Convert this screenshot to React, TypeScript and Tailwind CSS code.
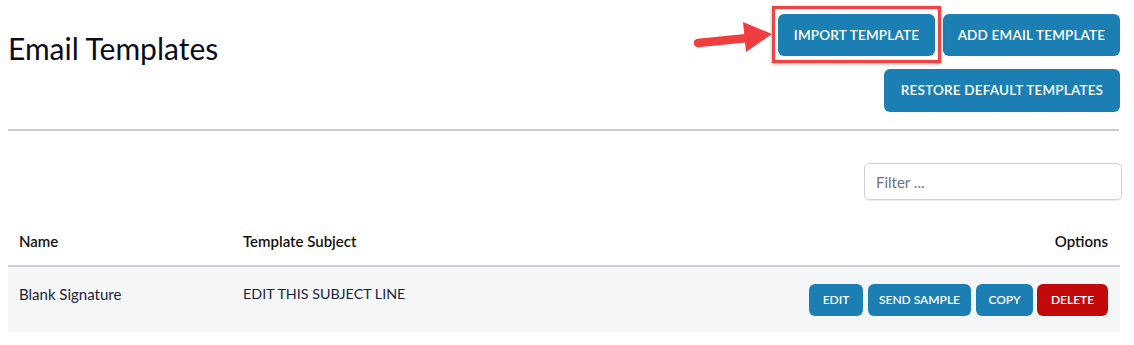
import React from "react";

const font = { fontFamily: '"Source Sans Pro", Lato, "Noto Sans", sans-serif' };

function Btn({ children, className = "" }: { children: React.ReactNode; className?: string }) {
  return (
    <button
      className={`bg-[#1b7fb4] text-white uppercase font-semibold rounded-[6px] ${className}`}
    >
      {children}
    </button>
  );
}

export default function App() {
  return (
    <div className="w-[1134px] h-[345px] bg-white text-[#111827] overflow-hidden" style={font}>
      <div className="ml-[8px] w-[1112px]">
        <div className="flex justify-between">
          <h1 className="pt-[30px] text-[30px] leading-[36px] text-[#0c0c1a]">Email Templates</h1>
          <div className="flex flex-col items-end pt-[14px] gap-[13px]">
            <div className="flex gap-[8px]">
              <div className="relative">
                <div className="absolute -left-[6px] -top-[8px] -right-[6px] -bottom-[7px] border-[3px] border-[#ef4444] shadow-[0_1px_3px_rgba(0,0,0,0.35),inset_0_0_2px_rgba(0,0,0,0.25)]" />
                <svg className="absolute left-[-86px] top-[6px]" width="82" height="34" viewBox="0 0 82 34">
                  <line x1="6" y1="23" x2="56" y2="18" stroke="#ef3e3e" strokeWidth="8.5" strokeLinecap="round" />
                  <polygon points="51,2 80,14 54,32" fill="#ef3e3e" />
                </svg>
                <Btn className="relative h-[42px] w-[157px] text-[13.5px] tracking-[0.2px]">Import Template</Btn>
              </div>
              <Btn className="h-[42px] w-[177px] text-[13.5px] tracking-[0.2px]">Add Email Template</Btn>
            </div>
            <Btn className="h-[43px] w-[236px] text-[13.5px] tracking-[0.2px]">Restore Default Templates</Btn>
          </div>
        </div>
        <div className="mt-[17px] h-[2px] w-[1111px] bg-[#c9ccd0]" />
        <div className="flex justify-end mt-[32px] -mr-[2px]">
          <input
            placeholder="Filter ..."
            className="w-[258px] h-[37px] border border-[#cfd2d6] rounded-[5px] px-[11px] text-[15px] text-[#333] placeholder:text-[#6b7280] shadow-[0_1px_1px_rgba(0,0,0,0.08)] outline-none"
            style={font}
          />
        </div>
        <div className="mt-[19px]">
          <div className="flex items-center h-[48px] pb-[2px] border-b-2 border-[#c9ccd0] text-[15px] font-semibold text-[#111]">
            <div className="pl-[11px] w-[235px]">Name</div>
            <div className="flex-1">Template Subject</div>
            <div className="pr-[12px]">Options</div>
          </div>
          <div className="flex items-start h-[65px] bg-[#f5f6f8] text-[15px] text-[#1a1f3a]">
            <div className="pl-[11px] w-[235px] pt-[15px] leading-[24px]">Blank Signature</div>
            <div className="flex-1 pt-[15px] leading-[24px] text-[14.3px]">EDIT THIS SUBJECT LINE</div>
            <div className="flex gap-[5px] pr-[12px] pt-[17px]">
              <Btn className="h-[32px] w-[54px] text-[12px]">Edit</Btn>
              <Btn className="h-[32px] w-[103px] text-[12px]">Send Sample</Btn>
              <Btn className="h-[32px] w-[57px] text-[12px]">Copy</Btn>
              <button className="-ml-[1px] h-[32px] w-[71px] text-[12px] bg-[#c20a0a] text-white uppercase font-semibold rounded-[6px]">Delete</button>
            </div>
          </div>
        </div>
      </div>
    </div>
  );
}
